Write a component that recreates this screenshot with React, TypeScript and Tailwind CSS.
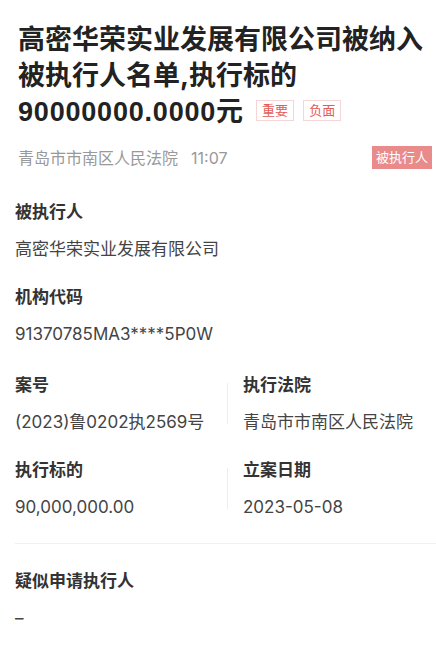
import React from 'react';

// 数字用 Inter，中文用思源黑体
const font = { fontFamily: 'Inter, "Noto Sans CJK SC", sans-serif' };

// 标题后面的小标签
const Tag = ({ text }: { text: string }) => (
    <span className="inline-flex items-center h-[21px] px-[5px] ml-[9px] align-middle border border-[#f6d5d5] text-[#e25b57] text-[13px] font-normal leading-none relative -top-[3px]">
        {text}
    </span>
);

const Field = ({ label, value }: { label: string; value: string }) => (
    <div className="flex flex-col">
        <div className="text-[17px] leading-[24px] font-semibold text-[#333]">{label}</div>
        <div className="mt-[13px] text-[17px] leading-[24px] text-[#444]">{value}</div>
    </div>
);

export default function App() {
    return (
        <div className="w-[436px] min-h-[649px] bg-white overflow-hidden" style={font}>
            {/* 头部 */}
            <div className="pt-[22px] pl-[18px] pr-[4px]">
                <h1 className="text-[27px] leading-[36px] font-bold text-[#222]">
                    高密华荣实业发展有限公司被纳入被执行人名单,执行标的
                    <br />
                    <span className="font-['Liberation_Sans','Noto_Sans_CJK_SC',sans-serif] tracking-[0.8px]">90000000.0000</span>
                    元
                    <span className="ml-[4px]" />
                    <Tag text="重要" />
                    <Tag text="负面" />
                </h1>
                <div className="mt-[16px] flex items-center justify-between h-[23px]">
                    <div className="flex items-center gap-[13px] text-[16px] text-[#999]">
                        <span>青岛市市南区人民法院</span>
                        <span>11:07</span>
                    </div>
                    <span className="h-[23px] px-[4px] flex items-center bg-[#e98b8b] text-white text-[13px]">
                        被执行人
                    </span>
                </div>
            </div>

            {/* 详情 */}
            <div className="pl-[15px] mt-[31px]">
                <Field label="被执行人" value="高密华荣实业发展有限公司" />
                <div className="mt-[24px]">
                    <Field label="机构代码" value="91370785MA3****5P0W" />
                </div>

                <div className="mt-[27px] flex">
                    <div className="w-[212px]">
                        <Field label="案号" value="(2023)鲁0202执2569号" />
                    </div>
                    <div className="w-px h-[41px] self-center bg-[#eeeeee]" />
                    <div className="pl-[15px]">
                        <Field label="执行法院" value="青岛市市南区人民法院" />
                    </div>
                </div>

                <div className="mt-[24px] flex">
                    <div className="w-[212px]">
                        <Field label="执行标的" value="90,000,000.00" />
                    </div>
                    <div className="w-px h-[41px] self-center bg-[#eeeeee]" />
                    <div className="pl-[15px]">
                        <Field label="立案日期" value="2023-05-08" />
                    </div>
                </div>

                <div className="mt-[24px] h-px bg-[#f0f0f0]" />

                <div className="mt-[25px]">
                    <Field label="疑似申请执行人" value="–" />
                </div>
            </div>
        </div>
    );
}
